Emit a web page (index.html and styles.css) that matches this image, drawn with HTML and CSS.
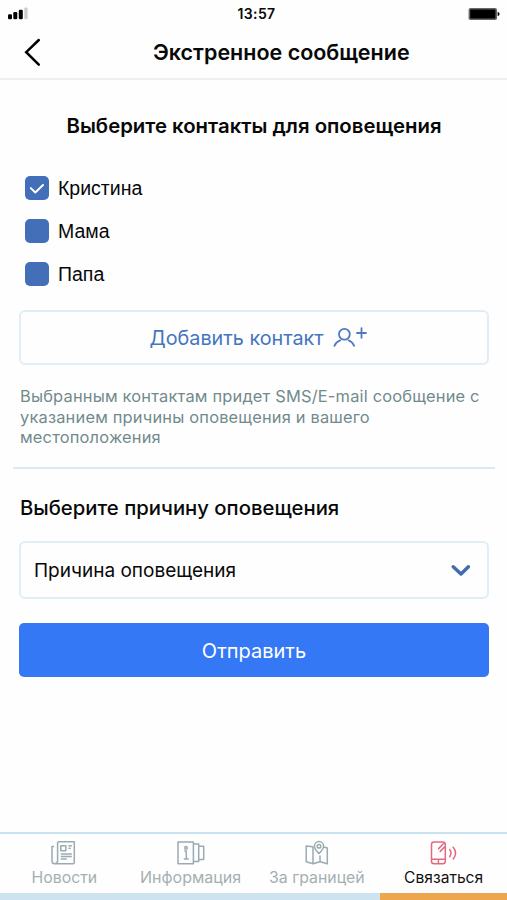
FILE: index.html
```html
<!DOCTYPE html>
<html lang="ru">
<head>
<meta charset="utf-8">
<meta name="viewport" content="width=device-width, initial-scale=1">
<title>Экстренное сообщение</title>
<link rel="stylesheet" href="styles.css">
</head>
<body>
<div class="screen">
  <div class="status">
    <svg class="signal" width="20" height="13" viewBox="0 0 20 13"><rect x="0" y="7.2" width="4" height="5" rx="1.2"/><rect x="5.3" y="5" width="4" height="7.2" rx="1.2"/><rect x="10.8" y="2.7" width="4" height="9.5" rx="1.2"/><rect x="16.3" y="0.4" width="3.3" height="11.8" rx="1.2" fill="#ccc"/></svg>
    <span class="time">13:57</span>
    <svg class="battery" width="32" height="14" viewBox="0 0 32 14"><rect x="0.6" y="1" width="28.4" height="12" rx="1.8" fill="#666"/><rect x="2.2" y="2.6" width="25.2" height="8.8" rx="0.6"/><path d="M29.6 4.8q2 .7 2 2.2t-2 2.2z"/></svg>
  </div>
  <header class="header">
    <button class="back" aria-label="Назад"><svg width="18" height="30" viewBox="0 0 18 30"><path d="M14.8 2 2.2 14.2 14.8 26.7"/></svg></button>
    <h1 class="title">Экстренное сообщение</h1>
  </header>
  <main class="content">
    <h2 class="heading">Выберите контакты для оповещения</h2>
    <ul class="contacts">
      <li class="contact"><span class="check"><svg width="24" height="24" viewBox="0 0 24 24"><path d="M5.8 12.1 10.3 16.5 18 9"/></svg></span><span>Кристина</span></li>
      <li class="contact"><span class="check"></span><span>Мама</span></li>
      <li class="contact"><span class="check"></span><span>Папа</span></li>
    </ul>
    <button class="add"><span>Добавить контакт</span><svg width="36" height="22" viewBox="0 0 36 22"><circle cx="11.4" cy="7.2" r="5.4"/><path d="M1.4 18.8Q3.3 14.8 7.2 13.4M15.6 13.4Q19.4 14.8 21.2 18.8M24 6H33M28.5 1.2V10.8"/></svg></button>
    <p class="hint">Выбранным контактам придет SMS/E-mail сообщение с указанием причины оповещения и вашего местоположения</p>
    <hr class="divider">
    <h3 class="subheading">Выберите причину оповещения</h3>
    <div class="select"><span>Причина оповещения</span><svg width="20" height="14" viewBox="0 0 20 14"><path d="M2.2 2.8 10 10 17.4 2.8"/></svg></div>
    <button class="send">Отправить</button>
  </main>
  <nav class="tabs">
    <a class="tab news"><svg width="26" height="24" viewBox="0 0 26 24"><path d="M7 .8H23.3V21.5Q23.3 22.8 22 22.8H3.5Q1 22.8 1 20V5.5H3M6.6 .8V20Q6.5 22.6 3.5 22.8M9.8 4.7h5v5h-5zM17.5 4.7h3.4M17.5 7.2h2.3M9.8 13h11M9.8 15.5h11M9.8 18h6"/></svg><span>Новости</span></a>
    <a class="tab info"><svg width="28" height="24" viewBox="0 0 28 24"><path d="M1 .9H16.4V22.7H1zM16.6 3H21.7V20.6H16.6M22 5.3H26.7V18.4H22M7.3 10H9.3V17.9M6.8 17.9H11.8"/><circle cx="9" cy="6.9" r="1.3"/></svg><span>Информация</span></a>
    <a class="tab abroad"><svg width="24" height="24" viewBox="0 0 24 24"><path d="M8 5.7 1.2 5V20.7L8 22.7 15 20.7 22.3 22.7V7L18.8 6M8 5.7V22.7M15 14.5V20.7M14 12.5C10.5 9 9.4 7.2 9.4 5.2a4.6 4.6 0 0 1 9.2 0C18.6 7.2 17.5 9 14 12.5z"/><circle cx="14" cy="5.2" r="1.8"/></svg><span>За границей</span></a>
    <a class="tab contact-tab"><svg width="28" height="24" viewBox="0 0 28 24"><path d="M4 1H12.7Q15.3 1 15.3 3.5V20.2Q15.3 22.7 12.7 22.7H4Q1.5 22.7 1.5 20.2V3.5Q1.5 1 4 1zM1.5 18.3H15.3M8.4 18.5V22.5M8.6 7.6 13.4 2.8M10.2 10.4 14.8 5.8M19.7 8.5Q22.3 12 19.7 15.7M23.2 6.2Q28 12 23.2 18"/></svg><span>Связаться</span></a>
  </nav>
  <div class="bar"><span class="bar-active"></span></div>
</div>
</body>
</html>
```

FILE: styles.css
```css
* { box-sizing: border-box; }
body { margin: 0; background: #fff; color: #080808; font-family: Inter, "Liberation Sans", sans-serif; }
h1, h2, h3, p, ul { margin: 0; padding: 0; }
button { font: inherit; border: 0; background: none; padding: 0; margin: 0; }
svg { display: block; flex: none; overflow: visible; }
span { white-space: nowrap; }
.screen { width: 507px; height: 900px; display: flex; flex-direction: column; overflow: hidden; background: #fefefe; }
.status { height: 27px; display: grid; grid-template-columns: 1fr auto 1fr; align-items: center; padding: 0 7px 0 8px; }
.battery { justify-self: end; }
.time { font-size: 14px; font-weight: 600; line-height: 27px; letter-spacing: .4px; padding-left: 5px; }
.header { height: 53px; display: flex; align-items: center; border-bottom: 2px solid #efefef; padding-left: 24px; }
.back { width: 20px; }
.back path { fill: none; stroke: #000; stroke-width: 2.5; stroke-linecap: round; }
.title { flex: 1; padding: 0 0 2px 109px; font-size: 21.5px; font-weight: 600; line-height: 28px; white-space: nowrap; }
.content { flex: 1; display: flex; flex-direction: column; padding: 0 18px 0 19px; }
.heading { margin-top: 32px; text-align: center; font-size: 20.35px; font-weight: 600; line-height: 28px; white-space: nowrap; }
.contacts { margin: 36px 0 0 6px; list-style: none; display: flex; flex-direction: column; gap: 19px; font-family: "Liberation Sans", sans-serif; font-size: 19.5px; }
.contact { height: 24px; display: flex; align-items: center; gap: 9px; line-height: 24px; }
.check { width: 24px; height: 24px; border-radius: 5px; background: #426fb7; }
.check path { fill: none; stroke: #fff; stroke-width: 2; stroke-linecap: round; stroke-linejoin: round; }
.add { height: 55px; margin-top: 24px; padding-left: 10px; border: 2px solid #e0edf6; border-radius: 6px; display: flex; align-items: center; justify-content: center; gap: 9px; font-size: 19.8px; color: #4475c0; }
.add path, .add circle { fill: none; stroke: #5279bd; stroke-width: 1.8; stroke-linecap: round; }
.hint { margin: 21px 0 0 1px; font-size: 16.4px; letter-spacing: .2px; line-height: 20.5px; color: #718a8c; }
.divider { width: 482px; height: 2px; margin: 19px 0 0 -6px; border: 0; background: #dbe9f4; flex: none; }
.subheading { margin: 25px 0 0 1px; font-size: 20.3px; font-weight: 500; line-height: 28px; white-space: nowrap; }
.select { height: 58px; margin-top: 19px; padding: 2px 16px 0 13px; border: 2px solid #e0eef5; border-radius: 6px; display: flex; align-items: center; justify-content: space-between; font-size: 19px; }
.select path { fill: none; stroke: #426bb2; stroke-width: 3.5; stroke-linecap: round; stroke-linejoin: round; }
.send { height: 54px; margin-top: 24px; padding-top: 2px; border-radius: 5px; background: #3478f6; color: #fff; font-size: 20px; }
.tabs { height: 61px; border-top: 2px solid #c9e2f1; display: grid; grid-template-columns: repeat(4, 1fr); font-size: 15.8px; color: #a4b0b2; }
.tab { display: flex; flex-direction: column; align-items: center; padding-top: 7px; gap: 2px; line-height: 21px; }
.news { padding-left: 2px; }
.info { padding-left: 1px; font-size: 16px; }
.tab path, .tab circle { fill: none; stroke: #9aabb1; stroke-width: 1.5; stroke-linejoin: round; }
.contact-tab { color: #111; font-size: 15.6px; }
.contact-tab path { stroke: #e5697e; stroke-linecap: round; }
.bar { height: 7px; background: #cde3f0; display: flex; justify-content: flex-end; }
.bar-active { width: 127px; background: #eea64e; }
```
